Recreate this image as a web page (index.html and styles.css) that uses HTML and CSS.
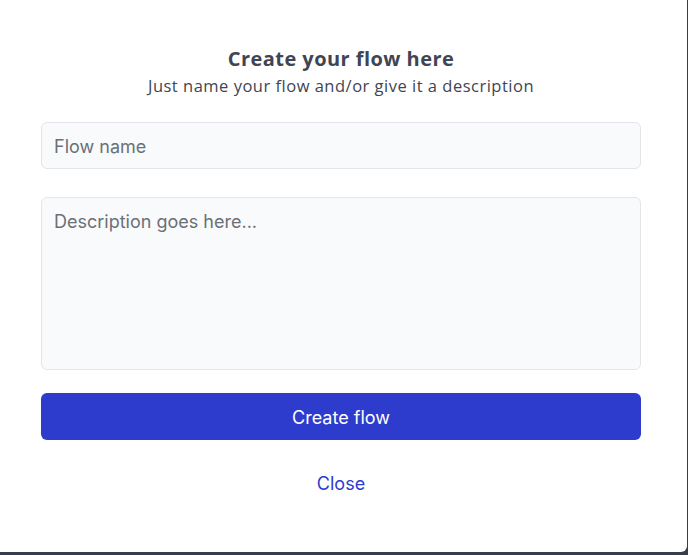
FILE: index.html
```html
<!DOCTYPE html>
<html>
<head>
<meta charset="utf-8">
<link rel="stylesheet" href="styles.css">
</head>
<body>
<div class="modal">
  <h1 class="title">Create your flow here</h1>
  <p class="subtitle">Just name your flow and/or give it a description</p>
  <form class="form">
    <input class="field" type="text" placeholder="Flow name">
    <textarea class="field area" placeholder="Description goes here..."></textarea>
    <button class="btn" type="button">Create flow</button>
    <a class="close" href="#">Close</a>
  </form>
</div>
</body>
</html>
```
FILE: styles.css
```css
html, body { margin: 0; padding: 0; }
body {
  background: #363e4b;
  width: 688px;
  height: 555px;
  overflow: hidden;
}
.modal {
  box-sizing: border-box;
  width: 687px;
  height: 552px;
  background: #ffffff;
  border-bottom-right-radius: 6px;
  padding: 45px 46px 0 41px;
  display: flex;
  flex-direction: column;
  align-items: stretch;
}
.title {
  margin: 0;
  text-align: center;
  font-family: "Open Sans", sans-serif;
  font-weight: 700;
  font-size: 20px;
  line-height: 28px;
  letter-spacing: 0.45px;
  color: #3f4553;
}
.subtitle {
  margin: 0;
  text-align: center;
  font-family: "Open Sans", sans-serif;
  font-size: 16.5px;
  line-height: 26px;
  letter-spacing: 0.5px;
  color: #3f4553;
}
.form {
  display: flex;
  flex-direction: column;
  margin-top: 23px;
}
.field {
  box-sizing: border-box;
  width: 600px;
  height: 47px;
  border: 1px solid #e3e5e9;
  border-radius: 6px;
  background: #f9fafb;
  padding: 2px 12px 0;
  font-family: Inter, sans-serif;
  font-size: 18px;
  color: #374151;
  outline: none;
}
.field::placeholder { color: #6b7076; }
.area {
  height: 173px;
  margin-top: 28px;
  padding: 11px 12px 10px;
  line-height: 26px;
  resize: none;
}
.btn {
  margin-top: 23px;
  width: 600px;
  height: 47px;
  border: none;
  border-radius: 6px;
  background: #2d3ccc;
  color: #ffffff;
  font-family: Inter, sans-serif;
  font-size: 18px;
  padding-top: 2px;
}
.close {
  align-self: center;
  margin-top: 32px;
  font-family: Inter, sans-serif;
  font-size: 18px;
  line-height: 24px;
  color: #2d3ccc;
  text-decoration: none;
}
```
